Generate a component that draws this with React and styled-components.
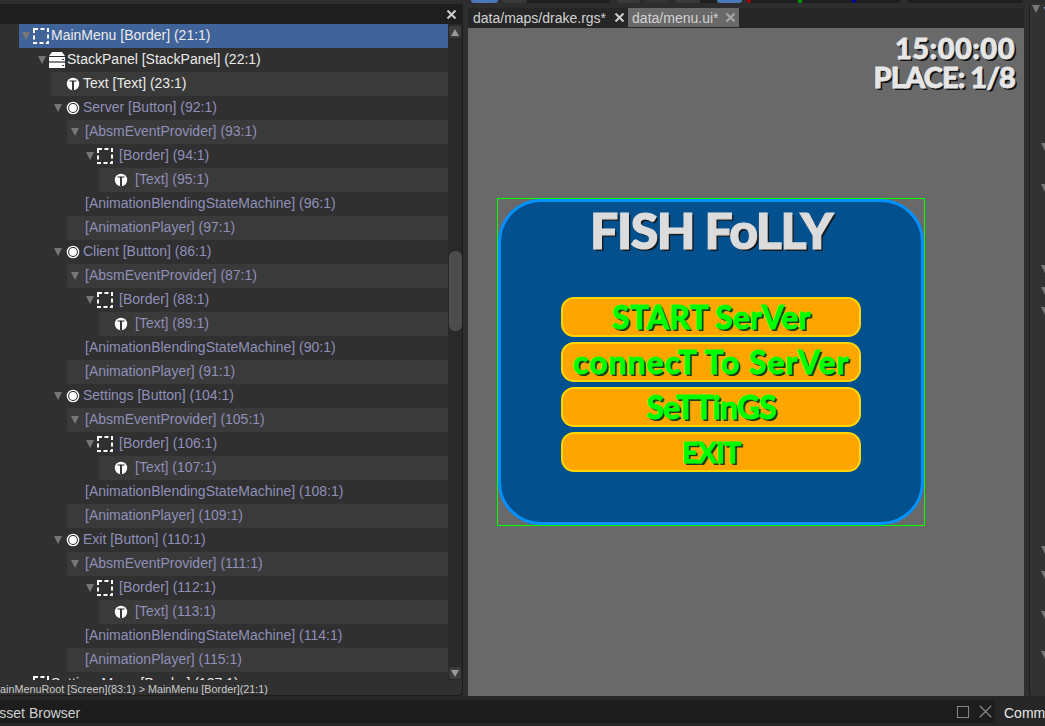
import React from "react";
import styled, { createGlobalStyle } from "styled-components";

const Global = createGlobalStyle`
  html, body { margin: 0; padding: 0; background: #262626; }
  body { width: 1045px; height: 726px; overflow: hidden; font-family: "Liberation Sans", Arial, sans-serif; }
`;

const Page = styled.div`
  width: 1045px; height: 726px; display: flex; flex-direction: column; overflow: hidden; background: #262626;
`;
const TopStrip = styled.div`
  height: 4px; flex: none; display: flex; padding-left: 471px; background: #2d2d2d; align-items: flex-start;
`;
const ToolPart = styled.div`
  width: ${p => p.$w}px; height: 3px; flex: none; margin-left: ${p => p.$ml || 0}px; background: ${p => p.$c || "#3a3a3a"}; border-radius: ${p => p.$flat ? 0 : "0 0 3px 3px"};
`;
const Main = styled.div`
  height: 692px; flex: none; display: flex; gap: 5px; background: #2e2e2e;
`;
const LeftPanel = styled.section`
  width: 462px; height: 691px; flex: none; display: flex; flex-direction: column; background: #303030; border-right: 1px solid #1c1c1c; border-bottom: 1px solid #1c1c1c; border-radius: 0 0 4px 0; overflow: hidden;
`;
const PanelHeader = styled.div`
  height: 20px; flex: none; background: #1e1e1e; display: flex; justify-content: flex-end; align-items: center; padding-right: 6px; box-sizing: border-box;
`;
const TreeArea = styled.div`
  flex: none; display: flex; height: 656px;
`;
const TreeList = styled.div`
  width: 448px; flex: none; overflow: hidden; height: 656px;
`;
const Row = styled.div`
  height: 24px; display: flex; align-items: center; box-sizing: border-box; white-space: nowrap;
  margin-left: ${p => p.$bgStart}px;
  padding-left: ${p => p.$pad}px;
  background: ${p => p.$selected ? "#40639a" : p.$alt ? "#3a3a3a" : "transparent"};
  font-size: 14px;
  color: ${p => p.$dim ? "#8f8fb8" : "#ebebeb"};
`;
const RowLabel = styled.span`
  margin-bottom: 2px;
`;
const Arrow = styled.svg`
  width: 10px; height: 8px; flex: none; margin-right: ${p => p.$mr || 0}px;
`;
const NodeIcon = styled.svg`
  width: 16px; height: 16px; flex: none; margin-right: ${p => p.$mr ?? 0}px; margin-bottom: 1px;
`;
const Scroller = styled.div`
  width: 14px; flex: none; height: 656px; background: #292929; display: flex; flex-direction: column; align-items: center; padding-top: 2px; box-sizing: border-box;
`;
const ScrollButton = styled.div`
  width: 12px; height: 12px; flex: none; background: #3c3c3c; border-radius: 2px; display: flex; align-items: center; justify-content: center;
`;
const ScrollThumb = styled.div`
  width: 13px; height: 80px; flex: none; margin-top: 213px; margin-bottom: 336px; background: #4c4c4c; border-radius: 6px;
`;
const PathBar = styled.div`
  height: 15px; flex: none; font-size: 10.8px; line-height: 15px; padding-top: 2px; box-sizing: border-box; color: #cccccc; white-space: nowrap; margin-left: -9px;
`;
const Center = styled.section`
  width: 556px; flex: none; display: flex; flex-direction: column;
`;
const Tabs = styled.div`
  height: 24px; flex: none; background: #262626; border-top: 4px solid #2d2d2d; display: flex; align-items: flex-start; box-sizing: border-box;
`;
const Tab = styled.div`
  height: 19px; display: flex; align-items: center; padding: 0 4px 0 ${p => p.$pl || 4}px; gap: ${p => p.$gap}px; font-size: 14px; white-space: nowrap;
  background: ${p => p.$active ? "#696969" : "transparent"};
  color: #d2d2d2;
`;
const Viewport = styled.div`
  position: relative; flex: 1; background: #696969; padding: 170px 0 0 29px; box-sizing: border-box; min-height: 0;
`;
const Hud = styled.div`
  position: absolute; top: 5px; right: 9px; text-align: right; font-family: "Lato", "Liberation Sans", sans-serif; font-weight: 900;
  font-size: 29px; line-height: 29px; color: #e6e6e6; -webkit-text-stroke: 0.8px #e6e6e6; text-shadow: 2px 2px 0 #111;
`;
const HudLine = styled.div`
  letter-spacing: ${p => p.$ls}px; white-space: nowrap;
`;
const Bounds = styled.div`
  width: 428px; height: 328px; box-sizing: border-box; border: 1px solid #00ff00;
`;
const Menu = styled.div`
  height: 326px; box-sizing: border-box; background: #02508d; border: 3px solid #0091ff; border-radius: 43px; display: flex; flex-direction: column; align-items: center;
`;
const Title = styled.h1`
  margin: 3px 0 0; height: 55px; font-family: "Lato", "Liberation Sans", sans-serif; font-weight: 900; font-size: 50px; line-height: 50px; letter-spacing: -1.4px; white-space: nowrap; color: #dcdcdc; -webkit-text-stroke: 1.2px #dcdcdc; text-shadow: 2px 2px 0 #1a1a1a;
`;
const Buttons = styled.div`
  margin-top: 37px; display: flex; flex-direction: column; gap: 5px;
`;
const GameButton = styled.div`
  width: 300px; height: 40px; box-sizing: border-box; padding-bottom: 2px; background: #ffa500; border: 2px solid #ffd700; border-radius: 13px; display: flex; align-items: center; justify-content: center;
  font-family: "Lato", "Liberation Sans", sans-serif; font-weight: 900; font-size: ${p => p.$fs ?? 32}px; letter-spacing: ${p => p.$ls ?? 0}px; white-space: nowrap; color: #00ff00; -webkit-text-stroke: 0.8px #00ff00; text-shadow: 2px 2px 0 #1f3a1a;
`;
const RightGutter = styled.section`
  width: 16px; flex: none; background: #323232; border-left: 1px solid #1c1c1c; border-radius: 4px 0 0 4px; box-sizing: border-box; display: flex; flex-direction: column; padding: 1px 0 0 1px; overflow: hidden; height: 692px;
`;
const GutterHead = styled.div`
  display: flex; align-items: flex-start; gap: 3px; font-size: 14px; line-height: 14px; color: #dddddd; height: 8px;
`;
const GutterArrow = styled.svg`
  width: 10px; height: 8px; flex: none; margin-top: ${p => p.$mt}px; margin-left: 9px;
`;
const Bottom = styled.div`
  height: 30px; flex: none; display: flex; gap: 5px; padding-top: 4px; box-sizing: border-box;
`;
const BottomBar = styled.div`
  width: 995px; height: 23px; flex: none; background: #1d1d1d; display: flex; align-items: center; overflow: hidden;
`;
const BottomTitle = styled.span`
  font-size: 14px; color: #d0d0d0; margin: 2px 0 0 -10px; white-space: nowrap;
`;
const BarActions = styled.div`
  margin-left: auto; display: flex; gap: 10px; align-items: center; padding-right: 3px;
`;
const BottomTab = styled.div`
  flex: 1; height: 24px; background: #262626; border-radius: 4px 0 0 4px; font-size: 14px; color: #e6e6e6; padding: 5px 0 0 4px; box-sizing: border-box; overflow: hidden; white-space: nowrap;
`;

const Tri = ({ mr }) => (
  <Arrow $mr={mr} viewBox="0 0 10 8"><path d="M1 0H9L5 8Z" fill="#777" /></Arrow>
);
const BorderIcon = ({ mr }) => (
  <NodeIcon $mr={mr} viewBox="0 0 16 16"><rect x="1" y="1" width="14" height="14" fill="none" stroke="#fff" strokeWidth="2" strokeDasharray="4 2.5" /></NodeIcon>
);
const StackIcon = ({ mr }) => (
  <NodeIcon $mr={mr} viewBox="0 0 16 16">
    <path d="M3 0H13L16 4H0Z" fill="#fff" />
    <rect x="0" y="5" width="16" height="4.4" fill="#fff" />
    <rect x="0" y="10.6" width="16" height="5.4" fill="#fff" />
    <rect x="13" y="7" width="2" height="1" fill="#333" />
    <rect x="13" y="13" width="2" height="1" fill="#333" />
  </NodeIcon>
);
const TextIcon = ({ mr }) => (
  <NodeIcon $mr={mr} viewBox="0 0 16 16">
    <circle cx="8" cy="8" r="6.2" fill="#fff" />
    <path d="M4.5 4.5H11.5V5.6H8.9V14.2H7.1V5.6H4.5Z" fill="#222" />
  </NodeIcon>
);
const ButtonIcon = ({ mr }) => (
  <NodeIcon $mr={mr} viewBox="0 0 16 16">
    <circle cx="8" cy="8" r="5.6" fill="#222" stroke="#fff" strokeWidth="1.4" />
    <circle cx="8" cy="8" r="3.9" fill="#fff" />
  </NodeIcon>
);
const CloseIcon = ({ size = 9, color = "#cfcfcf", width = 2 }) => (
  <svg width={size} height={size} viewBox="0 0 9 9" style={{ flex: "none" }}>
    <path d="M.5 .5L8.5 8.5M8.5 .5L.5 8.5" stroke={color} strokeWidth={width} />
  </svg>
);

const buttonGroup = (name, b, a1, a2, a3, a4, a5) => [
  { kind: "button", arrow: true, arrowGap: 2, start: 0, pad: 53, gap: 2, label: `${name} [Button] (${b}:1)`, dim: true },
  { arrow: true, arrowGap: 5, start: 67, pad: 3, label: `[AbsmEventProvider] (${a1}:1)`, dim: true, alt: true },
  { kind: "border", arrow: true, arrowGap: 2, start: 0, pad: 85, gap: 6, label: `[Border] (${a2}:1)`, dim: true },
  { kind: "text", start: 99, pad: 14, gap: 6, label: `[Text] (${a3}:1)`, dim: true, alt: true },
  { start: 0, pad: 85, label: `[AnimationBlendingStateMachine] (${a4}:1)`, dim: true },
  { start: 67, pad: 18, label: `[AnimationPlayer] (${a5}:1)`, dim: true, alt: true },
];

const rows = [
  { kind: "border", arrow: true, arrowGap: 2, start: 19, pad: 2, gap: 2, label: "MainMenu [Border] (21:1)", selected: true },
  { kind: "stack", arrow: true, arrowGap: 2, start: 0, pad: 37, gap: 2, label: "StackPanel [StackPanel] (22:1)" },
  { kind: "text", start: 51, pad: 14, gap: 2, label: "Text [Text] (23:1)", alt: true },
  ...buttonGroup("Server", 92, 93, 94, 95, 96, 97),
  ...buttonGroup("Client", 86, 87, 88, 89, 90, 91),
  ...buttonGroup("Settings", 104, 105, 106, 107, 108, 109),
  ...buttonGroup("Exit", 110, 111, 112, 113, 114, 115),
  { kind: "border", arrow: true, arrowGap: 2, start: 0, pad: 21, gap: 2, label: "SettingsMenu [Border] (127:1)" },
];

const icons = { border: BorderIcon, stack: StackIcon, text: TextIcon, button: ButtonIcon };

const TreeRow = ({ r }) => {
  const Icon = icons[r.kind];
  return (
    <Row $bgStart={r.start} $pad={r.pad} $selected={r.selected} $alt={r.alt} $dim={r.dim}>
      {r.arrow ? <Tri mr={r.arrowGap} /> : null}
      {Icon ? <Icon mr={r.gap} /> : null}
      <RowLabel>{r.label}</RowLabel>
    </Row>
  );
};

const toolParts = [
  { w: 27, c: "#4a78b8" }, { w: 25, ml: 4 }, { w: 83, c: "#1f1f1f", flat: true },
  { w: 23, ml: 7 }, { w: 23, ml: 5, c: "#333" }, { w: 25, ml: 7 }, { w: 17, c: "#1f1f1f", flat: true },
  { w: 25, c: "#4a78b8" }, { w: 4, ml: 5, c: "#a00000" }, { w: 47, c: "#1f1f1f", flat: true },
  { w: 4, c: "#00a000" }, { w: 50, c: "#1f1f1f", flat: true }, { w: 4, c: "#0000a0" },
  { w: 44, c: "#1f1f1f", flat: true }, { w: 115, ml: 8, c: "#1f1f1f", flat: true },
];

const gutter = [130, 33, 73, 14, 12, 231, 17, 32, 32];

export default function App() {
  return (
    <Page>
      <Global />
      <TopStrip>
        {toolParts.map((t, i) => <ToolPart key={i} $w={t.w} $ml={t.ml} $c={t.c} $flat={t.flat} />)}
      </TopStrip>
      <Main>
        <LeftPanel>
          <PanelHeader><CloseIcon /></PanelHeader>
          <TreeArea>
            <TreeList>{rows.map((r, i) => <TreeRow key={i} r={r} />)}</TreeList>
            <Scroller>
              <ScrollButton><svg width="8" height="7" viewBox="0 0 8 7"><path d="M4 0L8 7H0Z" fill="#999" /></svg></ScrollButton>
              <ScrollThumb />
              <ScrollButton><svg width="8" height="7" viewBox="0 0 8 7"><path d="M0 0H8L4 7Z" fill="#999" /></svg></ScrollButton>
            </Scroller>
          </TreeArea>
          <PathBar>MainMenuRoot [Screen](83:1) &gt; MainMenu [Border](21:1)</PathBar>
        </LeftPanel>
        <Center>
          <Tabs>
            <Tab $pl={5} $gap={9}>data/maps/drake.rgs* <CloseIcon /></Tab>
            <Tab $active $gap={8}>data/menu.ui* <CloseIcon color="#a8a8a8" /></Tab>
          </Tabs>
          <Viewport>
            <Hud>
              <HudLine $ls={0.5}>15:00:00</HudLine>
              <HudLine $ls={-0.9}>PLACE: 1/8</HudLine>
            </Hud>
            <Bounds>
              <Menu>
                <Title>FISH FoLLY</Title>
                <Buttons>
                  <GameButton $ls={0}>START SerVer</GameButton>
                  <GameButton $ls={0.9}>connecT To SerVer</GameButton>
                  <GameButton $ls={-0.9}>SeTTinGS</GameButton>
                  <GameButton $fs={29} $ls={-1}>EXIT</GameButton>
                </Buttons>
              </Menu>
            </Bounds>
          </Viewport>
        </Center>
        <RightGutter>
          <GutterHead>
            <Arrow viewBox="0 0 10 8"><path d="M1 0H9L5 8Z" fill="#777" /></Arrow>
            <span>V</span>
          </GutterHead>
          {gutter.map((m, i) => (
            <GutterArrow key={i} $mt={m} viewBox="0 0 10 8"><path d="M1 0H9L5 8Z" fill="#777" /></GutterArrow>
          ))}
        </RightGutter>
      </Main>
      <Bottom>
        <BottomBar>
          <BottomTitle>Asset Browser</BottomTitle>
          <BarActions>
            <svg width="12" height="12" viewBox="0 0 12 12"><rect x=".5" y=".5" width="11" height="11" fill="none" stroke="#888" /></svg>
            <CloseIcon size={13} color="#888" width={0.8} />
          </BarActions>
        </BottomBar>
        <BottomTab>Command</BottomTab>
      </Bottom>
    </Page>
  );
}
